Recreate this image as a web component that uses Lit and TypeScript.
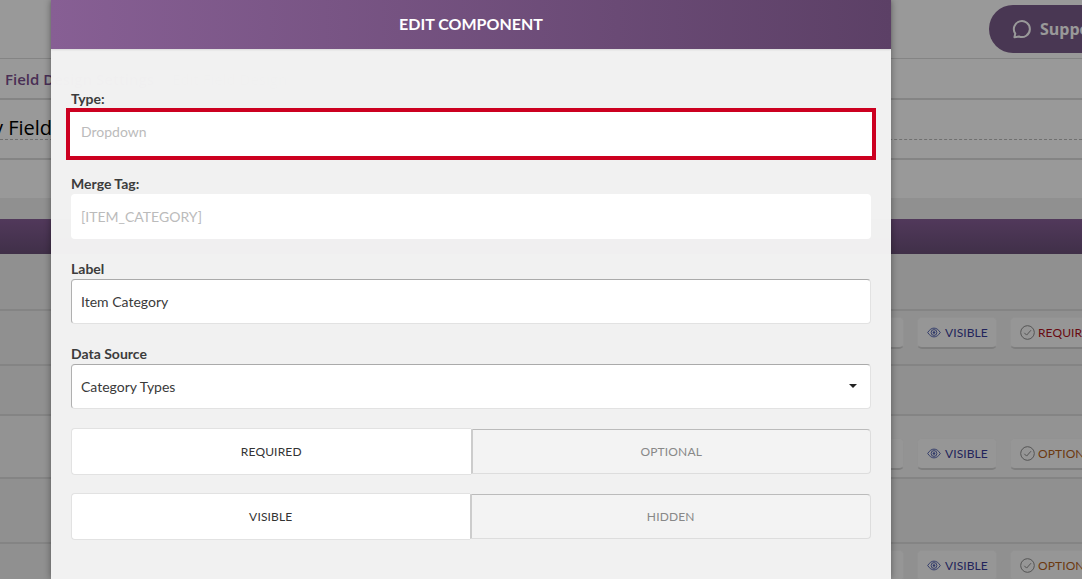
import { LitElement, html, css } from "lit";
import { customElement } from "lit/decorators.js";

const eye = html`<svg class="ico" viewBox="0 0 16 12" width="14" height="11"><path d="M.8 6C3 2.600 5.400 1 8 1s5 1.600 7.200 5C13 9.400 10.600 11 8 11S3 9.400.8 6z" fill="none" stroke="currentColor" stroke-width="1.100"/><circle cx="8" cy="6" r="3.300" fill="none" stroke="currentColor" stroke-width="1.100"/><circle cx="8" cy="6" r="1.500" fill="currentColor"/></svg>`;
const check = html`<svg class="ico" viewBox="0 0 15 15" width="15" height="15"><circle cx="7.500" cy="7.500" r="6.800" fill="none" stroke="#8c8c8c" stroke-width="1"/><path d="M4.300 7.800l2.300 2.300L11 5.200" fill="none" stroke="#8c8c8c" stroke-width="1"/></svg>`;

@customElement("app-root")
export class AppRoot extends LitElement {
  static styles = css`
    :host { display: block; width: 1082px; height: 579px; position: relative; overflow: hidden; background: #fff; font-family: "Lato", sans-serif; }
    .page { display: flex; flex-direction: column; height: 579px; overflow: hidden; }
    .top { height: 59px; flex: none; display: flex; justify-content: flex-end; align-items: flex-start; padding-top: 5px; box-sizing: border-box; border-bottom: 1px solid #ddd; overflow: hidden; }
    .support { width: 160px; height: 48px; margin-right: -67px; flex: none; border-radius: 24px 0 0 24px; background: #7b5c8a; color: #fff; display: flex; align-items: center; gap: 9px; padding-left: 22px; box-sizing: border-box; font: 700 16px "Open Sans", sans-serif; white-space: nowrap; }
    .crumb { height: 41px; flex: none; box-sizing: border-box; border-bottom: 2px solid #ddd; display: flex; align-items: center; padding-left: 5px; font: 600 15px "Open Sans", sans-serif; color: #7b4f8e; white-space: nowrap; }
    .crumb span { margin-left: 18px; color: #999; font-weight: 400; }
    .title { height: 60px; flex: none; box-sizing: border-box; border-bottom: 2px solid #ddd; }
    .title-line { height: 40px; box-sizing: border-box; padding-top: 15px; border-bottom: 1px dashed #bbb; font: 400 20px/26px "Open Sans", sans-serif; color: #000; text-indent: -7px; white-space: nowrap; }
    .space { height: 38px; flex: none; }
    .band { height: 21px; flex: none; background: #f0f0f0; }
    .bar { height: 35px; flex: none; background: linear-gradient(#885f98, #6b5079); }
    .row { flex: none; box-sizing: border-box; border-bottom: 2px solid #ddd; background: #f0f0f0; display: flex; justify-content: flex-end; align-items: flex-start; gap: 13px; overflow: hidden; }
    .h57 { height: 57px; }
    .h55 { height: 55px; padding-top: 6px; }
    .h50 { height: 50px; }
    .h63 { height: 63px; padding-top: 22px; background: #f5f5f5; }
    .h65 { height: 65px; }
    .h40 { height: 40px; padding-top: 6px; border-bottom: 0; }
    .btn { flex: none; height: 32px; box-sizing: border-box; border: 1px solid #f4f4f4; border-bottom: 2px solid #d2d2d2; border-radius: 5px; background: #fbfbfb; display: flex; align-items: center; gap: 4px; padding-left: 9px; font-size: 12px; letter-spacing: .1px; white-space: nowrap; }
    .prev { width: 60px; }
    .vis { width: 80px; color: #3a3c98; }
    .vis .ico { color: #5060b0; }
    .state { width: 94px; margin-right: -22px; gap: 3px; }
    .r { color: #b01020; }
    .o { color: #b5601a; }

    .scrim { position: absolute; inset: 0; background: rgba(0,0,0,.4); }
    .modal { position: absolute; left: 51px; top: 0; width: 840px; height: 579px; background: rgba(243,243,243,.985); box-shadow: 0 0 7px rgba(0,0,0,.4); }
    .head { height: 49px; box-sizing: border-box; padding-bottom: 2px; background: linear-gradient(90deg, #875f94, #5c4066); color: #fff; font-weight: 700; font-size: 16px; display: flex; align-items: center; justify-content: center; box-shadow: 0 1px 2px rgba(0,0,0,.1); }
    .form { padding: 41px 20px 0; }
    label { display: block; font-size: 14px; line-height: 18px; font-weight: 700; color: #3c3c3c; margin-bottom: 1px; }
    .type-label { margin-bottom: 0; }
    .field { height: 45px; box-sizing: border-box; background: #fff; border-radius: 4px; display: flex; align-items: center; padding: 0 10px; font-size: 14px; color: #3a3a3a; margin-bottom: 21px; }
    .ro { color: #bbb; }
    .type { height: 52px; margin: 0 -5px 15px; padding: 0 11px 6px; border: 4px solid #cc0020; border-radius: 0; }
    .edit { padding-left: 9px; border: 1px solid #e2e2e2; border-top-color: #aaa; border-left-color: #b0b0b0; }
    .select { justify-content: space-between; margin-bottom: 20px; padding-right: 13px; padding-bottom: 1px; }
    .caret { width: 0; height: 0; border: 4px solid transparent; border-top-color: #222; border-bottom: 0; }
    .toggle { display: flex; height: 45px; margin-bottom: 20px; font-size: 12px; letter-spacing: .15px; }
    .toggle > div { display: flex; align-items: center; justify-content: center; box-sizing: border-box; }
    .on { flex: 0 0 399.5px; background: #fff; color: #333; border: 1px solid #e2e2e2; border-right: 0; border-radius: 4px 0 0 4px; height: 47px; margin-top: -1px; }
    .off { flex: 1; color: #888; background: #f3f3f3; border: 1px solid #ddd; border-top-color: #bbb; border-left: 2px solid #ccc; border-radius: 0 4px 4px 0; }
    .v .on { flex-basis: 398.5px; }
  `;

  private buttons(state: string, cls: string) {
    return html`<div class="btn prev"></div>
      <div class="btn vis">${eye} VISIBLE</div>
      <div class="btn state ${cls}">${check} ${state}</div>`;
  }

  render() {
    return html`
      <div class="page">
        <div class="top">
          <div class="support">
            <svg viewBox="0 0 20 20" width="20" height="20"><path d="M3.400 18.200l.9-3.600A8 8 0 1 1 8 17.500z" fill="none" stroke="#fff" stroke-width="2" stroke-linejoin="round"/></svg>
            Support
          </div>
        </div>
        <div class="crumb">Field Design Settings <span>Edit Field Design</span></div>
        <div class="title"><div class="title-line">y Field</div></div>
        <div class="space"></div>
        <div class="band"></div>
        <div class="bar"></div>
        <div class="row h57"></div>
        <div class="row h55">${this.buttons("REQUIRED", "r")}</div>
        <div class="row h50"></div>
        <div class="row h63">${this.buttons("OPTIONAL", "o")}</div>
        <div class="row h65"></div>
        <div class="row h40">${this.buttons("OPTIONAL", "o")}</div>
      </div>
      <div class="scrim"></div>
      <div class="modal">
        <div class="head">EDIT COMPONENT</div>
        <div class="form">
          <label class="type-label">Type:</label>
          <div class="field ro type">Dropdown</div>
          <label>Merge Tag:</label>
          <div class="field ro">[ITEM_CATEGORY]</div>
          <label>Label</label>
          <div class="field edit">Item Category</div>
          <label>Data Source</label>
          <div class="field edit select">Category Types <i class="caret"></i></div>
          <div class="toggle"><div class="on">REQUIRED</div><div class="off">OPTIONAL</div></div>
          <div class="toggle v"><div class="on">VISIBLE</div><div class="off">HIDDEN</div></div>
        </div>
      </div>
    `;
  }
}
